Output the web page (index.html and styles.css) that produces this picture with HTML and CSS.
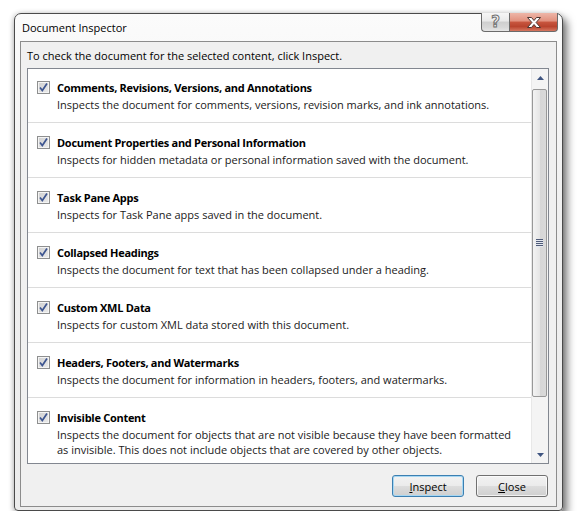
FILE: index.html
```html
<!DOCTYPE html>
<html lang="en">
<head>
  <meta charset="UTF-8" />
  <title>Document Inspector</title>
  <meta name="viewport" content="width=device-width, initial-scale=1.0" />
  <link rel="stylesheet" href="styles.css">
</head>
<body>

<div class="window">
  <div class="titlebar">
    <div class="title">Document Inspector</div>
    <div class="caption-buttons">
      <div class="cap-btn help"><span class="help-glyph">?</span></div>
      <div class="cap-btn close">
        <svg width="14" height="11" viewBox="0 0 14 11">
          <path d="M0.5 0.5h4l2.5 3 2.5-3h4l-4.4 5 4.4 5h-4l-2.5-3-2.5 3h-4l4.4-5z" fill="#fff" stroke="#4b3530" stroke-width="1"/>
        </svg>
      </div>
    </div>
  </div>

  <div class="client">
    <p class="intro">To check the document for the selected content, click Inspect.</p>

    <div class="listbox">
      <div class="items">
        <div class="item">
          <span class="check"><svg width="11" height="11" viewBox="0 0 11 11"><path d="M2 5.5l2.3 3 4.7-7" fill="none" stroke="#3d5590" stroke-width="1.7"/></svg></span>
          <div class="item-text">
            <div class="item-title">Comments, Revisions, Versions, and Annotations</div>
            <div class="item-desc">Inspects the document for comments, versions, revision marks, and ink annotations.</div>
          </div>
        </div>
        <div class="item">
          <span class="check"><svg width="11" height="11" viewBox="0 0 11 11"><path d="M2 5.5l2.3 3 4.7-7" fill="none" stroke="#3d5590" stroke-width="1.7"/></svg></span>
          <div class="item-text">
            <div class="item-title">Document Properties and Personal Information</div>
            <div class="item-desc">Inspects for hidden metadata or personal information saved with the document.</div>
          </div>
        </div>
        <div class="item">
          <span class="check"><svg width="11" height="11" viewBox="0 0 11 11"><path d="M2 5.5l2.3 3 4.7-7" fill="none" stroke="#3d5590" stroke-width="1.7"/></svg></span>
          <div class="item-text">
            <div class="item-title">Task Pane Apps</div>
            <div class="item-desc">Inspects for Task Pane apps saved in the document.</div>
          </div>
        </div>
        <div class="item">
          <span class="check"><svg width="11" height="11" viewBox="0 0 11 11"><path d="M2 5.5l2.3 3 4.7-7" fill="none" stroke="#3d5590" stroke-width="1.7"/></svg></span>
          <div class="item-text">
            <div class="item-title">Collapsed Headings</div>
            <div class="item-desc">Inspects the document for text that has been collapsed under a heading.</div>
          </div>
        </div>
        <div class="item">
          <span class="check"><svg width="11" height="11" viewBox="0 0 11 11"><path d="M2 5.5l2.3 3 4.7-7" fill="none" stroke="#3d5590" stroke-width="1.7"/></svg></span>
          <div class="item-text">
            <div class="item-title">Custom XML Data</div>
            <div class="item-desc">Inspects for custom XML data stored with this document.</div>
          </div>
        </div>
        <div class="item">
          <span class="check"><svg width="11" height="11" viewBox="0 0 11 11"><path d="M2 5.5l2.3 3 4.7-7" fill="none" stroke="#3d5590" stroke-width="1.7"/></svg></span>
          <div class="item-text">
            <div class="item-title">Headers, Footers, and Watermarks</div>
            <div class="item-desc">Inspects the document for information in headers, footers, and watermarks.</div>
          </div>
        </div>
        <div class="item">
          <span class="check"><svg width="11" height="11" viewBox="0 0 11 11"><path d="M2 5.5l2.3 3 4.7-7" fill="none" stroke="#3d5590" stroke-width="1.7"/></svg></span>
          <div class="item-text">
            <div class="item-title">Invisible Content</div>
            <div class="item-desc">Inspects the document for objects that are not visible because they have been formatted<br>as invisible. This does not include objects that are covered by other objects.</div>
          </div>
        </div>
      </div>

      <div class="scrollbar">
        <div class="sb-arrow"><svg width="7" height="4" viewBox="0 0 7 4"><path d="M3.5 0L7 4H0z" fill="#3f5581"/></svg></div>
        <div class="sb-track">
          <div class="sb-thumb"><span class="grip"></span></div>
        </div>
        <div class="sb-arrow"><svg width="7" height="4" viewBox="0 0 7 4"><path d="M0 0h7L3.5 4z" fill="#3f5581"/></svg></div>
      </div>
    </div>

    <div class="buttons">
      <button class="btn default"><u>I</u>nspect</button>
      <button class="btn"><u>C</u>lose</button>
    </div>
  </div>
</div>

</body>
</html>
```

FILE: styles.css
```css
* {
  margin: 0; padding: 0; box-sizing: border-box;
}
body {
  background: #fff;
  font-family: "Open Sans", "Noto Sans", sans-serif;
  font-size: 11px;
  color: #000;
}

/* window frame */
.window {
  margin: 13px 0 0 14px;
  width: 549px;
  height: 498px;
  border: 1px solid #4a4a4a;
  border-radius: 7px 7px 4px 4px;
  background: linear-gradient(#fbfbfb, #f0f0f0 40%, #ececec);
  box-shadow: 4px 5px 9px rgba(0,0,0,0.55), -1px 0 5px rgba(0,0,0,0.18);
  padding: 0 5px 3px;
  display: flex;
  flex-direction: column;
}
.titlebar {
  height: 27px;
  display: flex;
  justify-content: space-between;
  align-items: flex-start;
}
.title {
  line-height: 27px;
  padding-left: 2px;
}
.caption-buttons {
  display: flex;
  margin-top: -1px;
  margin-right: -1px;
}
.cap-btn {
  height: 19px;
  border: 1px solid #6b6b6b;
  border-top: none;
  display: flex;
  align-items: center;
  justify-content: center;
}
.help {
  width: 28px;
  border-right: none;
  border-radius: 0 0 0 4px;
  background: linear-gradient(#f6f6f6, #e9e9e9 45%, #cfcfcf 50%, #d8d8d8 80%, #e6e6e6);
}
.help-glyph {
  font-family: "DejaVu Sans", sans-serif;
  font-weight: bold;
  font-size: 15px;
  line-height: 15px;
  color: #f4f4f4;
  -webkit-text-stroke: 1px #707070;
}
.close {
  width: 49px;
  border-radius: 0 0 4px 0;
  background: linear-gradient(#eeb6a8, #e2917e 45%, #c8563f 50%, #b9442e 75%, #d6765f);
}

/* client area */
.client {
  flex: 1;
  background: #f0f0f0;
  border: 1px solid #8c8c8c;
  padding: 6px 7px 9px 6px;
  display: flex;
  flex-direction: column;
}
.intro {
  line-height: 15px;
}

.listbox {
  margin-top: 5px;
  height: 396px;
  border: 1px solid #828790;
  background: #fff;
  display: flex;
}
.items {
  flex: 1;
  overflow: hidden;
}
.item {
  display: flex;
  padding: 12px 0 10px 9px;
  border-bottom: 1px solid #dcdcdc;
}
.item:first-child {
  padding-top: 11px;
}
.check {
  flex: none;
  width: 13px;
  height: 13px;
  margin-top: 1px;
  margin-right: 7px;
  border: 1px solid #8e8f8f;
  background: linear-gradient(135deg, #cfcfcf, #ececec);
  box-shadow: inset 0 0 0 1px #f4f4f4;
  display: flex;
}
.item-title {
  font-weight: bold;
  letter-spacing: -0.28px;
  line-height: 15px;
  margin-bottom: 2px;
}
.item-desc {
  line-height: 15px;
  color: #1a1a1a;
}

/* scrollbar */
.scrollbar {
  width: 17px;
  display: flex;
  flex-direction: column;
  background: #f4f4f4;
  border-left: 1px solid #e8e8e8;
}
.sb-arrow {
  height: 17px;
  display: flex;
  align-items: center;
  justify-content: center;
}
.sb-track {
  flex: 1;
}
.sb-thumb {
  height: 308px;
  margin: 3px 1px 0 0;
  border: 1px solid #989898;
  border-radius: 2px;
  background: linear-gradient(to right, #f3f3f3, #e6e6e6 50%, #d6d6d6 51%, #dadada);
  display: flex;
  align-items: center;
  justify-content: center;
}
.grip {
  width: 7px;
  height: 8px;
  background: repeating-linear-gradient(#4f5b78 0 1px, #e4e8ef 1px 2px);
}

/* dialog buttons */
.buttons {
  display: flex;
  justify-content: flex-end;
  gap: 12px;
  margin-top: 11px;
  padding-right: 1px;
}
.btn {
  width: 72px;
  height: 22px;
  font: inherit;
  color: #000;
  border: 1px solid #707070;
  border-radius: 3px;
  background: linear-gradient(#f2f2f2, #ebebeb 50%, #dddddd 51%, #cfcfcf);
  box-shadow: inset 0 0 0 1px rgba(255,255,255,0.7);
}
.btn.default {
  border-color: #3c7fb1;
  box-shadow: inset 0 0 0 1px #a6d7f3;
}
```
